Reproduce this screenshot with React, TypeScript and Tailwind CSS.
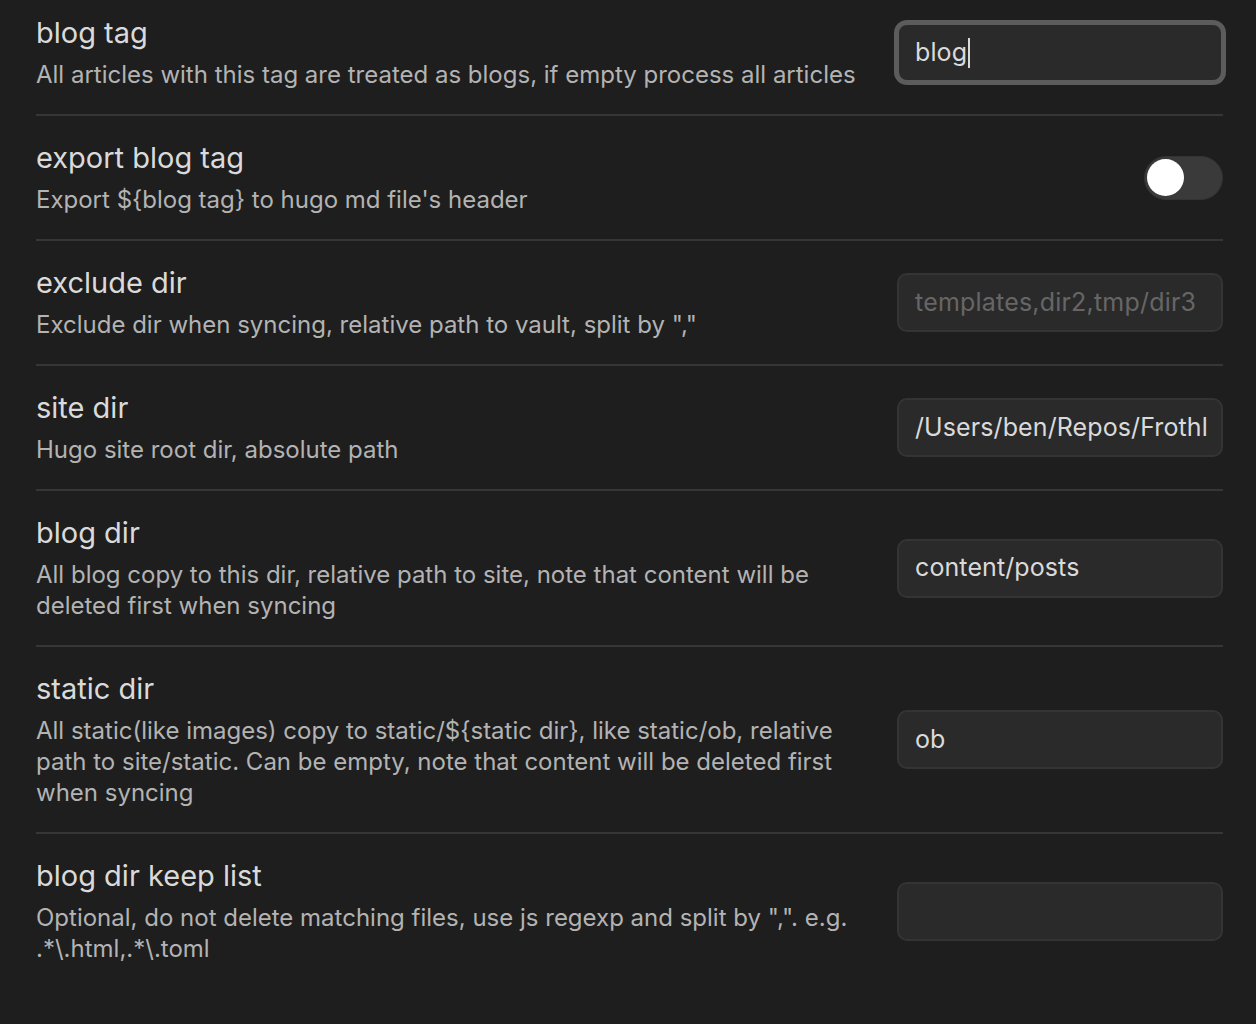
import React from "react";

type Row = {
  name: string;
  desc: string;
  control: "focused" | "toggle" | "input";
  value?: string;
  placeholder?: string;
};

const rows: Row[] = [
  {
    name: "blog tag",
    desc: "All articles with this tag are treated as blogs, if empty process all articles",
    control: "focused",
    value: "blog",
  },
  {
    name: "export blog tag",
    desc: "Export ${blog tag} to hugo md file's header",
    control: "toggle",
  },
  {
    name: "exclude dir",
    desc: 'Exclude dir when syncing, relative path to vault, split by ","',
    control: "input",
    placeholder: "templates,dir2,tmp/dir3",
  },
  {
    name: "site dir",
    desc: "Hugo site root dir, absolute path",
    control: "input",
    value: "/Users/ben/Repos/Frothl",
  },
  {
    name: "blog dir",
    desc: "All blog copy to this dir, relative path to site, note that content will be deleted first when syncing",
    control: "input",
    value: "content/posts",
  },
  {
    name: "static dir",
    desc: "All static(like images) copy to static/${static dir}, like static/ob, relative path to site/static. Can be empty, note that content will be deleted first when syncing",
    control: "input",
    value: "ob",
  },
  {
    name: "blog dir keep list",
    desc: 'Optional, do not delete matching files, use js regexp and split by ",". e.g. .*\\.html,.*\\.toml',
    control: "input",
  },
];

function Toggle() {
  return (
    <div className="w-[79px] h-[44px] rounded-full bg-[#3a3a3a] border border-[#333] flex items-center px-[2px]">
      <div className="w-[37px] h-[37px] rounded-full bg-white" />
    </div>
  );
}

function TextBox({ row }: { row: Row }) {
  const focused = row.control === "focused";
  return (
    <div
      className={
        focused
          ? "w-[326px] h-[59px] rounded-[10px] bg-[#2a2a2a] border-2 border-[#5c5c5c] shadow-[0_0_0_3px_#5c5c5c] flex items-center pl-[16px] pr-[12px]"
          : "w-[326px] h-[59px] rounded-[10px] bg-[#2a2a2a] border-2 border-[#343434] flex items-center pl-[16px] pr-[12px]"
      }
    >
      {row.value ? (
        <span className="text-[25px] tracking-[0.1px] text-[#dadada] whitespace-nowrap">{row.value}</span>
      ) : (
        <span className="text-[25px] tracking-[0.2px] text-[#666666] whitespace-nowrap">{row.placeholder}</span>
      )}
      {focused && <span className="w-[2px] h-[30px] bg-[#dadada] ml-[1px]" />}
    </div>
  );
}

export default function App() {
  return (
    <div
      className="w-[1256px] h-[1024px] overflow-hidden bg-[#1e1e1e] pl-[36px] pr-[33px]"
      style={{ fontFamily: "Inter, 'Noto Sans', sans-serif" }}
    >
      <div className="-mt-[9px]">
        {rows.map((row, i) => (
          <div
            key={row.name}
            className={
              i < rows.length - 1
                ? "flex items-center gap-[36px] py-[24px] border-b-2 border-[#363636]"
                : "flex items-center gap-[36px] py-[24px]"
            }
          >
            <div className="flex-1 min-w-0">
              <div className="text-[29px] leading-[35px] text-[#dadada]">{row.name}</div>
              <div className="mt-[9px] text-[24px] leading-[31px] text-[#b3b3b3]">{row.desc}</div>
            </div>
            <div className="flex-none">
              {row.control === "toggle" ? <Toggle /> : <TextBox row={row} />}
            </div>
          </div>
        ))}
      </div>
    </div>
  );
}
